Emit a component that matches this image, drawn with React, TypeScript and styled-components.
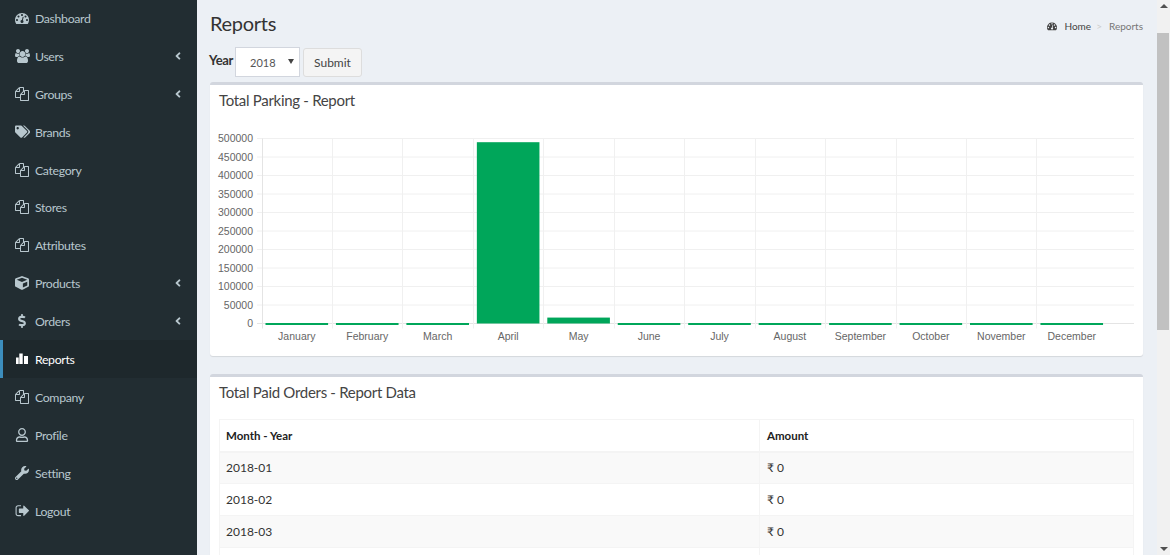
import React from 'react';
import styled, { createGlobalStyle } from 'styled-components';
import { FaTags, FaCube, FaDollarSign, FaWrench, FaRegUser, FaAngleLeft } from 'react-icons/fa';

const Global = createGlobalStyle`
  html, body { margin: 0; padding: 0; height: 100%; overflow: hidden; background: #ecf0f5; }
  * { box-sizing: border-box; }
  body { font-family: Lato, "Noto Sans", sans-serif; }
`;

const Page = styled.div`
  display: flex;
  width: 1170px;
  height: 555px;
  overflow: hidden;
`;

const Sidebar = styled.nav`
  flex: 0 0 197px;
  background: #222d32;
`;

const NavList = styled.ul`
  list-style: none;
  margin: -1px 0 0;
  padding: 0;
`;

const NavRow = styled.li<{ $active?: boolean }>`
  height: 37.92px;
  display: flex;
  align-items: center;
  padding-left: ${p => (p.$active ? 12 : 15)}px;
  padding-right: 13px;
  border-left: ${p => (p.$active ? '3px solid #3c8dbc' : 'none')};
  background: ${p => (p.$active ? '#1e282c' : 'transparent')};
  color: ${p => (p.$active ? '#ffffff' : '#b8c7ce')};
  font-size: 12.3px;
  letter-spacing: -0.35px;
`;

const NavIcon = styled.span`
  flex: 0 0 20px;
  display: flex;
  align-items: center;
  font-size: 14px;
`;

const NavLabel = styled.span`
  flex: 1;
  padding-top: 1px;
`;

const Chevron = styled.span`
  display: flex;
  font-size: 12px;
`;

const Main = styled.main`
  flex: 1;
  min-width: 0;
  padding: 0 14px 0 13px;
  background: #ecf0f5;
  overflow: hidden;
`;

const Header = styled.header`
  height: 47px;
  display: flex;
  justify-content: space-between;
  align-items: flex-start;
`;

const Title = styled.h1`
  margin: 8px 0 0;
  font-size: 20px;
  line-height: 30px;
  font-weight: 400;
  color: #333;
  letter-spacing: -0.3px;
`;

const Crumbs = styled.div`
  margin-top: 18px;
  display: flex;
  align-items: center;
  font-size: 10px;
  line-height: 16px;
  color: #444;
`;

const CrumbIcon = styled.span`
  display: flex;
  margin-right: 7px;
  font-size: 10px;
`;

const CrumbSep = styled.span`
  margin: 0 7px 0 5px;
  color: #ccc;
`;

const CrumbCurrent = styled.span`
  color: #777;
`;

const FilterForm = styled.form`
  height: 35px;
  display: flex;
  align-items: flex-start;
  margin-left: -1px;
`;

const FilterLabel = styled.label`
  margin-top: 5px;
  margin-right: 2px;
  width: 24px;
  font-size: 13px;
  font-weight: 700;
  line-height: 16px;
  color: #333;
  letter-spacing: -0.3px;
`;

const SelectWrap = styled.div`
  position: relative;
  width: 65px;
  height: 30px;
  margin-right: 3px;
  &::after {
    content: '';
    position: absolute;
    right: 6px;
    top: 12px;
    border-left: 3px solid transparent;
    border-right: 3px solid transparent;
    border-top: 5px solid #444;
    pointer-events: none;
  }
`;

const YearSelect = styled.select`
  appearance: none;
  width: 100%;
  height: 100%;
  padding: 0 0 0 14px;
  border: 1px solid #d2d6de;
  background: #fff;
  color: #555;
  font-family: inherit;
  font-size: 11px;
  border-radius: 0;
`;

const SubmitButton = styled.button`
  width: 59px;
  height: 29px;
  margin-top: 1px;
  border: 1px solid #ddd;
  border-radius: 3px;
  background: #f4f4f4;
  color: #444;
  font-family: inherit;
  font-size: 12px;
  padding: 0;
`;

const Card = styled.section`
  background: #fff;
  border-top: 3px solid #d2d6de;
  border-radius: 3px;
  box-shadow: 0 1px 1px rgba(0, 0, 0, 0.1);
  margin-bottom: 18px;
`;

const CardHead = styled.h3`
  margin: 0;
  padding: 4px 9px 0;
  height: 35px;
  font-size: 15px;
  line-height: 22px;
  font-weight: 400;
  color: #444;
  letter-spacing: -0.3px;
`;

const ChartFrame = styled.svg`
  display: block;
  width: 933px;
  height: 236px;
`;

const TableWrap = styled.div`
  padding: 7px 9px 0;
`;

const Table = styled.table`
  width: 100%;
  border-collapse: collapse;
  table-layout: fixed;
  font-size: 12px;
  color: #333;
`;

const HeadCell = styled.th<{ $w?: number }>`
  height: 32px;
  padding: 0 7px 0 6px;
  text-align: left;
  font-size: 11.5px;
  font-weight: 700;
  color: #222;
  border: 1px solid #f4f4f4;
  border-bottom-width: 2px;
  width: ${p => (p.$w ? `${p.$w}px` : 'auto')};
  & + & {
    padding-left: 7px;
  }
`;

const Row = styled.tr<{ $odd: boolean }>`
  background: ${p => (p.$odd ? '#f9f9f9' : '#fff')};
`;

const Cell = styled.td`
  height: 32px;
  padding: 0 7px 0 6px;
  border: 1px solid #f4f4f4;
  & + & {
    padding-left: 7px;
  }
`;

const Scrollbar = styled.div`
  flex: 0 0 13px;
  background: #f1f1f1;
  display: flex;
  flex-direction: column;
  align-items: center;
  justify-content: space-between;
  position: relative;
  padding: 4px 0;
`;

const ArrowUp = styled.span`
  border-left: 4px solid transparent;
  border-right: 4px solid transparent;
  border-bottom: 4px solid #505050;
`;

const ArrowDown = styled.span`
  border-left: 4px solid transparent;
  border-right: 4px solid transparent;
  border-top: 4px solid #505050;
`;

const Thumb = styled.div`
  position: absolute;
  top: 33px;
  left: 0;
  right: 1px;
  height: 297px;
  background: #c1c1c1;
`;

const FaGlyph = ({ d, w = 1792, size = 1 }: { d: string; w?: number; size?: number }) => (
  <svg width={`${(size * w) / 1792}em`} height={`${size}em`} viewBox={`0 0 ${w} 1792`} fill="currentColor"><path d={d} /></svg>
);

const gauge = 'M384 1152q0-53-37.5-90.5t-90.5-37.5-90.5 37.5-37.5 90.5 37.5 90.5 90.5 37.5 90.5-37.5 37.5-90.5zm192-448q0-53-37.5-90.5t-90.5-37.5-90.5 37.5-37.5 90.5 37.5 90.5 90.5 37.5 90.5-37.5 37.5-90.5zm428 481l101-382q6-26-7.5-48.5t-38.5-29.5-48 6.5-30 39.5l-101 382q-60 5-107 43.5t-63 98.5q-20 77 20 146t117 89 146-20 89-117q16-60-6-117t-72-91zm660-33q0-53-37.5-90.5t-90.5-37.5-90.5 37.5-37.5 90.5 37.5 90.5 90.5 37.5 90.5-37.5 37.5-90.5zm-640-640q0-53-37.5-90.5t-90.5-37.5-90.5 37.5-37.5 90.5 37.5 90.5 90.5 37.5 90.5-37.5 37.5-90.5zm448 192q0-53-37.5-90.5t-90.5-37.5-90.5 37.5-37.5 90.5 37.5 90.5 90.5 37.5 90.5-37.5 37.5-90.5zm320 448q0 261-141 483-19 29-54 29h-1402q-35 0-54-29-141-221-141-483 0-182 71-348t191-286 286-191 348-71 348 71 286 191 191 286 71 348z';
const files = 'M1696 384q40 0 68 28t28 68v1216q0 40-28 68t-68 28h-960q-40 0-68-28t-28-68v-288h-544q-40 0-68-28t-28-68v-672q0-40 20-88t48-76l408-408q28-28 76-48t88-20h416q40 0 68 28t28 68v328q68-40 128-40h416zm-544 213l-299 299h299v-299zm-640-384l-299 299h299v-299zm194 647l316-316v-416h-384v416q0 40-28 68t-68 28h-416v640h512v-256q0-40 20-88t48-76zm956 804v-1152h-384v416q0 40-28 68t-68 28h-416v640h896z';
const signOut = 'M704 1440q0 4 1 20t.5 26.5-3 23.5-10 19.5-20.5 6.5h-320q-119 0-203.5-84.5t-84.5-203.5v-704q0-119 84.5-203.5t203.5-84.5h320q13 0 22.5 9.5t9.5 22.5q0 4 1 20t.5 26.5-3 23.5-10 19.5-20.5 6.5h-320q-66 0-113 47t-47 113v704q0 66 47 113t113 47h312l11.5 1 11.5 3 8 5.5 7 9 2 13.5zm928-544q0 26-19 45l-544 544q-19 19-45 19t-45-19-19-45v-288h-448q-26 0-45-19t-19-45v-384q0-26 19-45t45-19h448v-288q0-26 19-45t45-19 45 19l544 544q19 19 19 45z';
const users = 'M593 896q-162 5-265 128h-134q-82 0-138-40.5t-56-118.5q0-353 124-353 6 0 43.5 21t97.5 42.5 119 21.5q67 0 133-23-5 37-5 66 0 139 81 256zm1071 637q0 120-73 189.5t-194 69.5h-874q-121 0-194-69.5t-73-189.5q0-53 3.5-103.5t14-109 26.5-108.5 43-97.5 62-81 85.5-53.5 111.5-20q10 0 43 21.5t73 48 107 48 135 21.5 135-21.5 107-48 73-48 43-21.5q61 0 111.5 20t85.5 53.5 62 81 43 97.5 26.5 108.5 14 109 3.5 103.5zm-1024-1277q0 106-75 181t-181 75-181-75-75-181 75-181 181-75 181 75 75 181zm704 384q0 159-112.5 271.5t-271.5 112.5-271.5-112.5-112.5-271.5 112.5-271.5 271.5-112.5 271.5 112.5 112.5 271.5zm576 225q0 78-56 118.5t-138 40.5h-134q-103-123-265-128 81-117 81-256 0-29-5-66 66 23 133 23 59 0 119-21.5t97.5-42.5 43.5-21q124 0 124 353zm-128-609q0 106-75 181t-181 75-181-75-75-181 75-181 181-75 181 75 75 181z';

const Stats = () => (
  <svg width="1em" height="1em" viewBox="0 0 14 14" fill="currentColor">
    <rect x="1" y="5.5" width="2.7" height="6.5" />
    <rect x="4.3" y="1.5" width="3.4" height="10.5" />
    <rect x="9" y="4" width="4" height="8" />
  </svg>
);

const nav: { label: string; icon: React.ReactNode; more?: boolean; active?: boolean }[] = [
  { label: 'Dashboard', icon: <FaGlyph d={gauge} /> },
  { label: 'Users', icon: <FaGlyph d={users} w={1920} /> , more: true },
  { label: 'Groups', icon: <FaGlyph d={files} />, more: true },
  { label: 'Brands', icon: <FaTags size="1.1em" /> },
  { label: 'Category', icon: <FaGlyph d={files} /> },
  { label: 'Stores', icon: <FaGlyph d={files} /> },
  { label: 'Attributes', icon: <FaGlyph d={files} /> },
  { label: 'Products', icon: <FaCube />, more: true },
  { label: 'Orders', icon: <FaDollarSign />, more: true },
  { label: 'Reports', icon: <Stats />, active: true },
  { label: 'Company', icon: <FaGlyph d={files} /> },
  { label: 'Profile', icon: <FaRegUser /> },
  { label: 'Setting', icon: <FaWrench /> },
  { label: 'Logout', icon: <FaGlyph d={signOut} size={1.1} /> },
];

const months = ['January', 'February', 'March', 'April', 'May', 'June', 'July', 'August', 'September', 'October', 'November', 'December'];
const values = [0, 0, 0, 490000, 16000, 0, 0, 0, 0, 0, 0, 0];
const ticks = [500000, 450000, 400000, 350000, 300000, 250000, 200000, 150000, 100000, 50000, 0];

const X0 = 261.5;
const STEP = 70.45;
const TOP = 138.5;
const BASE = 323.5;
const yFor = (v: number) => BASE - ((BASE - TOP) * v) / 500000;

const Chart = () => (
  <ChartFrame viewBox="210 120 933 236">
    {ticks.map(t => (
      <line key={t} x1={257} x2={1134} y1={yFor(t)} y2={yFor(t)} stroke={t === 0 ? '#e4e4e4' : '#f0f0f0'} />
    ))}
    {months.map((m, i) => {
      const x = Math.round(X0 + i * STEP) + 0.5;
      return <line key={m} x1={x} x2={x} y1={TOP} y2={BASE + 5} stroke={i === 0 ? '#e4e4e4' : '#f0f0f0'} />;
    })}
    {ticks.map(t => (
      <text key={t} x={253} y={yFor(t) + 3.5} textAnchor="end" fontFamily="Liberation Sans, sans-serif" fontSize="10.5" fill="#666">{t}</text>
    ))}
    {months.map((m, i) => {
      const cx = X0 + 35.3 + i * STEP;
      const h = values[i] ? BASE - yFor(values[i]) : 2;
      const y = values[i] ? yFor(values[i]) : BASE - 0.5;
      return (
        <g key={m}>
          <rect x={cx - 31.3} y={y} width={62.6} height={h} fill="#00a65a" />
          <text x={cx} y={340} textAnchor="middle" fontFamily="Liberation Sans, sans-serif" fontSize="10.5" fill="#666">{m}</text>
        </g>
      );
    })}
  </ChartFrame>
);

const rows = ['2018-01', '2018-02', '2018-03'];

export default function App() {
  return (
    <Page>
      <Global />
      <Sidebar>
        <NavList>
          {nav.map(n => (
            <NavRow key={n.label} $active={n.active}>
              <NavIcon>{n.icon}</NavIcon>
              <NavLabel>{n.label}</NavLabel>
              {n.more && <Chevron><FaAngleLeft /></Chevron>}
            </NavRow>
          ))}
        </NavList>
      </Sidebar>
      <Main>
        <Header>
          <Title>Reports</Title>
          <Crumbs>
            <CrumbIcon><FaGlyph d={gauge} /></CrumbIcon>
            Home
            <CrumbSep>&gt;</CrumbSep>
            <CrumbCurrent>Reports</CrumbCurrent>
          </Crumbs>
        </Header>
        <FilterForm>
          <FilterLabel>Year</FilterLabel>
          <SelectWrap>
            <YearSelect defaultValue="2018">
              <option>2018</option>
            </YearSelect>
          </SelectWrap>
          <SubmitButton type="button">Submit</SubmitButton>
        </FilterForm>
        <Card>
          <CardHead>Total Parking - Report</CardHead>
          <Chart />
        </Card>
        <Card>
          <CardHead>Total Paid Orders - Report Data</CardHead>
          <TableWrap>
            <Table>
              <thead>
                <tr>
                  <HeadCell $w={540}>Month - Year</HeadCell>
                  <HeadCell>Amount</HeadCell>
                </tr>
              </thead>
              <tbody>
                {rows.map((r, i) => (
                  <Row key={r} $odd={i % 2 === 0}>
                    <Cell>{r}</Cell>
                    <Cell>₹ 0</Cell>
                  </Row>
                ))}
                <Row $odd={false}>
                  <Cell />
                  <Cell />
                </Row>
              </tbody>
            </Table>
          </TableWrap>
        </Card>
      </Main>
      <Scrollbar>
        <ArrowUp />
        <Thumb />
        <ArrowDown />
      </Scrollbar>
    </Page>
  );
}
